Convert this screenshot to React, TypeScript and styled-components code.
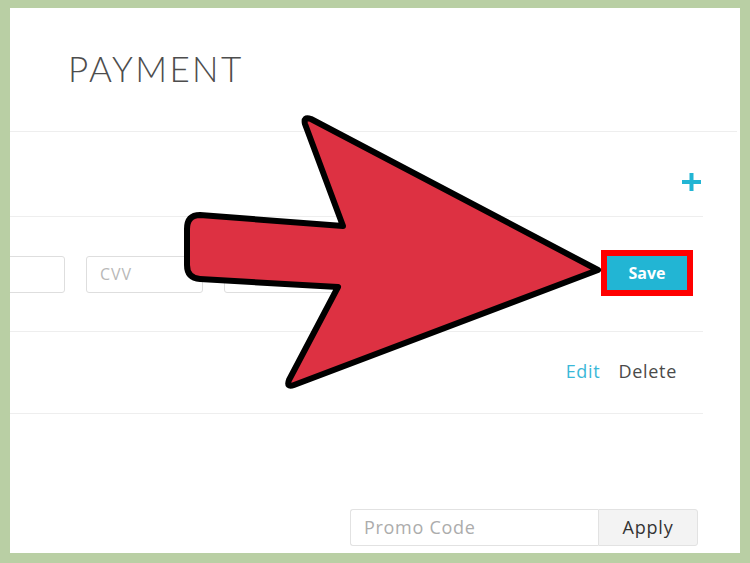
import React from "react";
import styled, { createGlobalStyle } from "styled-components";

const Global = createGlobalStyle`
  html, body { margin: 0; padding: 0; background: #b9cfa4; }
  body { font-family: "Open Sans", "Liberation Sans", sans-serif; }
  * { box-sizing: border-box; }
`;

const Page = styled.div`
  position: relative;
  width: 750px;
  height: 563px;
  padding: 8px 10px 10px 10px;
  background: #b9cfa4;
`;

const Panel = styled.div`
  width: 730px;
  height: 545px;
  background: #ffffff;
  overflow: hidden;
  display: flex;
  flex-direction: column;
`;

const Header = styled.div`
  height: 124px;
  flex-shrink: 0;
  border-bottom: 1px solid #eeeeee;
  margin-right: 3px;
  padding: 43px 0 0 58px;
`;

const Title = styled.h1`
  margin: 0;
  font-family: Lato, "Open Sans", sans-serif;
  font-weight: 300;
  font-size: 35px;
  letter-spacing: 2.4px;
  color: #4d4d4d;
  line-height: 1;
`;

const Section = styled.div<{ $h: number }>`
  height: ${(p) => p.$h}px;
  flex-shrink: 0;
  margin-right: 37px;
  border-bottom: 1px solid #eeeeee;
  display: flex;
`;

const PlusRow = styled(Section)`
  justify-content: flex-end;
  align-items: flex-start;
  padding: 41px 2px 0 0;
`;

const InputRow = styled(Section)`
  align-items: flex-start;
  padding: 39px 16px 0 0;
  margin-left: -60px;
`;

const Field = styled.div<{ $w: number }>`
  width: ${(p) => p.$w}px;
  height: 37px;
  border: 1px solid #dedede;
  border-radius: 3px;
  margin-right: 21px;
  padding: 0 13px;
  font-size: 16px;
  letter-spacing: 1px;
  line-height: 35px;
  color: #b8b8b8;
  flex-shrink: 0;
`;

const Spacer = styled.div`
  flex: 1;
`;

const SaveButton = styled.button`
  width: 80px;
  height: 34px;
  border: none;
  background: #22b5d4;
  color: #ffffff;
  font-family: "Open Sans", sans-serif;
  font-weight: 700;
  font-size: 16px;
  outline: 6px solid #ff0000;
  padding: 0;
`;

const ActionRow = styled(Section)`
  justify-content: flex-end;
  align-items: flex-start;
  padding: 27px 26px 0 0;
  gap: 18px;
`;

const Action = styled.span<{ $accent?: boolean }>`
  font-size: 18px;
  letter-spacing: 0.7px;
  line-height: 24px;
  color: ${(p) => (p.$accent ? "#3ab8d8" : "#4a4a4a")};
`;

const PromoRow = styled.div`
  display: flex;
  justify-content: flex-end;
  padding: 95px 42px 0 0;
`;

const PromoInput = styled.div`
  width: 248px;
  height: 37px;
  border: 1px solid #e2e2e2;
  border-right: none;
  border-radius: 3px 0 0 3px;
  padding: 0 13px;
  font-size: 18px;
  letter-spacing: 0.7px;
  line-height: 35px;
  color: #acacac;
`;

const ApplyButton = styled.div`
  width: 100px;
  height: 37px;
  border: 1px solid #e2e2e2;
  border-radius: 0 3px 3px 0;
  background: #f3f3f3;
  font-size: 18px;
  letter-spacing: 0.8px;
  line-height: 35px;
  text-align: center;
  color: #333333;
`;

const Overlay = styled.svg`
  position: absolute;
  left: 0;
  top: 0;
  pointer-events: none;
`;

const PlusIcon = () => (
  <svg width="19" height="18" viewBox="0 0 19 18">
    <rect x="7.5" y="0" width="4" height="18" fill="#22b5d4" />
    <rect x="0" y="7" width="19" height="4" fill="#22b5d4" />
  </svg>
);

export default function App() {
  return (
    <>
      <Global />
      <Page>
        <Panel>
          <Header>
            <Title>PAYMENT</Title>
          </Header>
          <PlusRow $h={85}>
            <PlusIcon />
          </PlusRow>
          <InputRow $h={115}>
            <Field $w={115} />
            <Field $w={117}>CVV</Field>
            <Field $w={117} />
            <Spacer />
            <SaveButton>Save</SaveButton>
          </InputRow>
          <ActionRow $h={82}>
            <Action $accent>Edit</Action>
            <Action>Delete</Action>
          </ActionRow>
          <PromoRow>
            <PromoInput>Promo Code</PromoInput>
            <ApplyButton>Apply</ApplyButton>
          </PromoRow>
        </Panel>
        <Overlay width="750" height="563" viewBox="0 0 750 563">
          <path
            d="M 200 215 L 343 226 L 305 124 Q 303 116 311 119 L 598 270 L 294 385 Q 286 388 289 380 L 338 287 L 200 279 Q 187 278 187 265 L 187 229 Q 187 215 200 215 Z"
            fill="#dd3142"
            stroke="#000000"
            strokeWidth="6"
            strokeLinejoin="round"
          />
        </Overlay>
      </Page>
    </>
  );
}
